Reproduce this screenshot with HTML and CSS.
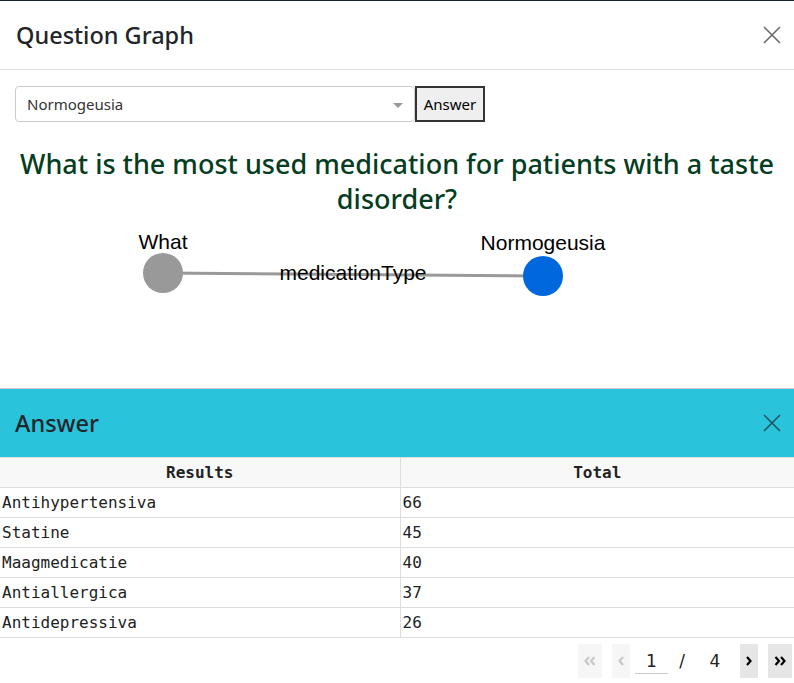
FILE: index.html
```html
<!DOCTYPE html>
<html>
<head>
<meta charset="utf-8">
<link rel="stylesheet" href="styles.css">
</head>
<body>
<div class="topline"></div>
<section class="modal">
  <header class="modal-head">
    <h2 class="modal-title">Question Graph</h2>
    <button class="close" aria-label="close">
      <svg width="20" height="20" viewBox="0 0 20 20"><path d="M2 2L18 18M18 2L2 18" stroke="#6b6b6b" stroke-width="1.6" fill="none"/></svg>
    </button>
  </header>
  <div class="controls">
    <div class="select">
      <span class="select-value">Normogeusia</span>
      <span class="caret"></span>
    </div>
    <button class="answer-btn">Answer</button>
  </div>
  <h1 class="question">What is the most used medication for patients with a taste disorder?</h1>
  <div class="graph">
    <svg width="794" height="150" viewBox="0 0 794 150">
      <line x1="163" y1="42" x2="543" y2="45" stroke="#999" stroke-width="3"/>
      <circle cx="163" cy="42" r="20" fill="#999"/>
      <circle cx="543" cy="45" r="20" fill="#0068dc"/>
      <text x="163" y="18" text-anchor="middle" class="glabel">What</text>
      <text x="543" y="19" text-anchor="middle" class="glabel">Normogeusia</text>
      <text x="353" y="49" text-anchor="middle" class="glabel">medicationType</text>
    </svg>
  </div>
</section>
<section class="answer">
  <header class="answer-head">
    <h2 class="answer-title">Answer</h2>
    <button class="close" aria-label="close">
      <svg width="20" height="20" viewBox="0 0 20 20"><path d="M2 2L18 18M18 2L2 18" stroke="#1e5560" stroke-width="1.6" fill="none"/></svg>
    </button>
  </header>
  <table class="results">
    <thead>
      <tr><th>Results</th><th>Total</th></tr>
    </thead>
    <tbody>
      <tr><td>Antihypertensiva</td><td>66</td></tr>
      <tr><td>Statine</td><td>45</td></tr>
      <tr><td>Maagmedicatie</td><td>40</td></tr>
      <tr><td>Antiallergica</td><td>37</td></tr>
      <tr><td>Antidepressiva</td><td>26</td></tr>
    </tbody>
  </table>
  <nav class="pager">
    <span class="pbtn disabled wide"><svg width="12" height="10" viewBox="0 0 12 10"><path d="M5 1L1.5 5L5 9M10.5 1L7 5L10.5 9" stroke="currentColor" stroke-width="2.2" fill="none"/></svg></span>
    <span class="pbtn disabled"><svg width="6" height="10" viewBox="0 0 6 10"><path d="M5 1L1.5 5L5 9" stroke="currentColor" stroke-width="2.2" fill="none"/></svg></span>
    <span class="pinput">1</span>
    <span class="ptext slash">/</span>
    <span class="ptext">4</span>
    <span class="pbtn active"><svg width="6" height="10" viewBox="0 0 6 10"><path d="M1 1L4.5 5L1 9" stroke="currentColor" stroke-width="2.2" fill="none"/></svg></span>
    <span class="pbtn active wide"><svg width="12" height="10" viewBox="0 0 12 10"><path d="M1.5 1L5 5L1.5 9M7 1L10.5 5L7 9" stroke="currentColor" stroke-width="2.2" fill="none"/></svg></span>
  </nav>
</section>
</body>
</html>
```
FILE: styles.css
```css
html, body {
  margin: 0;
  padding: 0;
  background: #fff;
  width: 794px;
  overflow: hidden;
}
body {
  font-family: "Noto Sans", "DejaVu Sans", sans-serif;
  color: #212529;
}
.topline {
  height: 1px;
  background: #17262d;
}
.modal-head {
  display: flex;
  align-items: center;
  justify-content: space-between;
  height: 68px;
  padding: 0 12px 0 16px;
  border-bottom: 1px solid #dee2e6;
}
.modal-title {
  margin: 0;
  font-size: 23.5px;
  font-weight: 500;
}
.close {
  background: none;
  border: 0;
  padding: 0;
  width: 20px;
  height: 20px;
  display: flex;
  cursor: pointer;
}
.controls {
  display: flex;
  padding: 16px 15px 0;
  height: 36px;
}
.select {
  width: 400px;
  box-sizing: border-box;
  border: 1px solid #ccc;
  border-radius: 4px;
  display: flex;
  align-items: center;
  justify-content: space-between;
  padding: 0 11px 0 11px;
  font-size: 15px;
  color: #333;
}
.caret {
  width: 0;
  height: 0;
  border-left: 5px solid transparent;
  border-right: 5px solid transparent;
  border-top: 5px solid #999;
  margin-top: 2px;
}
.answer-btn {
  height: 36px;
  width: 70px;
  box-sizing: border-box;
  border: 2px solid #333;
  background: #efefef;
  font-family: "Noto Sans", sans-serif;
  font-size: 15px;
  color: #000;
  padding: 0;
}
.question {
  margin: 24px 0 0;
  text-align: center;
  font-size: 27px;
  line-height: 35px;
  font-weight: 500;
  color: #053d22;
}
.graph {
  margin-top: 15px;
  height: 157px;
  border-bottom: 1px solid #ccc;
}
.graph svg {
  display: block;
}
.glabel {
  font-family: "Liberation Sans", Arial, sans-serif;
  font-size: 21px;
  fill: #000;
}
.answer-head {
  background: #29c3dc;
  height: 68px;
  display: flex;
  align-items: center;
  justify-content: space-between;
  padding: 0 12px 0 15px;
}
.answer-title {
  margin: 0;
  font-size: 23.5px;
  font-weight: 500;
  color: #212529;
}
.results {
  width: 100%;
  border-collapse: collapse;
  table-layout: fixed;
  font-family: "DejaVu Sans Mono", monospace;
  font-size: 16px;
  color: #222;
}
.results th, .results td {
  border: 1px solid #ddd;
  height: 30px;
  padding: 0 2px;
  box-sizing: border-box;
}
.results th:first-child { width: 400px; }
.results th {
  background: #f8f8f8;
  font-weight: bold;
  text-align: center;
}
.results tr > :first-child { border-left: 0; }
.results tr > :last-child { border-right: 0; }
.results td {
  text-align: left;
}
.pager {
  display: flex;
  justify-content: flex-end;
  align-items: center;
  padding: 6px 2px 0 0;
  font-family: "DejaVu Sans", sans-serif;
  font-size: 17px;
}
.pbtn {
  height: 34px;
  width: 18px;
  display: flex;
  align-items: center;
  justify-content: center;
}
.pbtn.wide { width: 24px; }
.pbtn.disabled {
  background: #f6f6f6;
  color: #c8c8c8;
}
.pbtn.active {
  background: #e6e6e6;
  color: #000;
}
.pbtn + .pbtn { margin-left: 10px; }
.pinput {
  width: 33px;
  text-align: center;
  border-bottom: 1px solid #ccc;
  line-height: 24px;
  margin-left: 5px;
  color: #222;
}
.ptext {
  width: 18px;
  text-align: center;
  color: #222;
}
.slash { margin-left: 5px; }
.ptext + .ptext { margin-left: 15px; }
.ptext + .pbtn { margin-left: 16px; }
```
